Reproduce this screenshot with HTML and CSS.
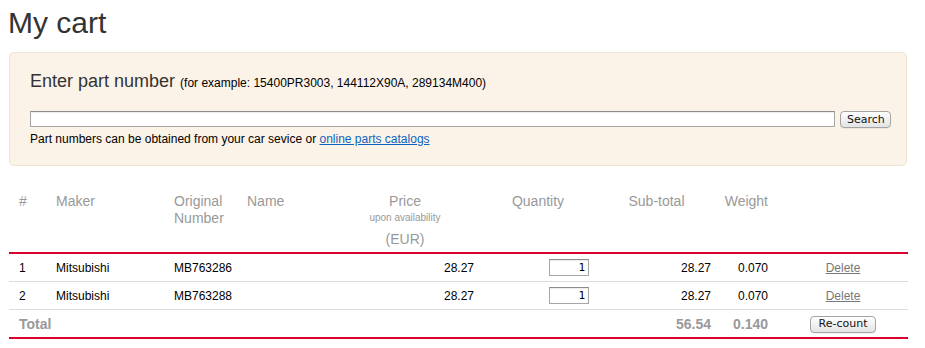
FILE: index.html
```html
<!DOCTYPE html>
<html lang="en">
<head>
  <meta charset="UTF-8">
  <title>My cart</title>
  <link rel="stylesheet" href="styles.css">
</head>
<body>

  <h1 class="page-title">My cart</h1>

  <div class="search-box">
    <h2 class="search-title">Enter part number <span class="example">(for example: 15400PR3003, 144112X90A, 289134M400)</span></h2>
    <form class="search-row" onsubmit="return false">
      <input type="text" class="search-input">
      <button type="submit" class="btn">Search</button>
    </form>
    <p class="hint">Part numbers can be obtained from your car sevice or <a href="#">online parts catalogs</a></p>
  </div>

  <table class="cart">
    <colgroup>
      <col class="c-num"><col class="c-maker"><col class="c-orig"><col class="c-name"><col class="c-price">
      <col class="c-qty"><col class="c-sub"><col class="c-weight"><col class="c-act">
    </colgroup>
    <thead>
      <tr>
        <th>#</th>
        <th>Maker</th>
        <th>Original Number</th>
        <th>Name</th>
        <th class="center">Price<span class="note">upon availability</span>(EUR)</th>
        <th class="center">Quantity</th>
        <th class="center">Sub-total</th>
        <th class="weight">Weight</th>
        <th></th>
      </tr>
    </thead>
    <tbody>
      <tr>
        <td>1</td>
        <td>Mitsubishi</td>
        <td>MB763286</td>
        <td></td>
        <td class="num">28.27</td>
        <td class="qty"><input type="text" class="qty-input" value="1"></td>
        <td class="num">28.27</td>
        <td class="num weight">0.070</td>
        <td class="center"><a href="#" class="delete">Delete</a></td>
      </tr>
      <tr>
        <td>2</td>
        <td>Mitsubishi</td>
        <td>MB763288</td>
        <td></td>
        <td class="num">28.27</td>
        <td class="qty"><input type="text" class="qty-input" value="1"></td>
        <td class="num">28.27</td>
        <td class="num weight">0.070</td>
        <td class="center"><a href="#" class="delete">Delete</a></td>
      </tr>
    </tbody>
    <tfoot>
      <tr>
        <td colspan="2">Total</td>
        <td></td>
        <td></td>
        <td></td>
        <td></td>
        <td class="num">56.54</td>
        <td class="num weight">0.140</td>
        <td class="center"><button type="button" class="btn btn-recount">Re-count</button></td>
      </tr>
    </tfoot>
  </table>

</body>
</html>
```

FILE: styles.css
```css
body {
  margin: 0;
  padding: 0 8px;
  background-color: white;
  color: black;
  font-family: "Liberation Sans", Arial, sans-serif;
  font-size: 12px;
}
.page-title {
  margin: 6px 0 12px;
  font-size: 30px;
  line-height: 34px;
  font-weight: normal;
  color: #333;
}
.search-box {
  margin: 0 10px 0 1px;
  padding: 17px 15px 18px 20px;
  background-color: #fbf3e8;
  border: 1px solid #efe4d3;
  border-radius: 5px;
}
.search-title {
  margin: 0 0 17px;
  font-size: 18px;
  line-height: 22px;
  font-weight: normal;
  color: #333;
}
.example {
  font-size: 12px;
  color: black;
}
.search-row {
  display: flex;
  align-items: flex-start;
  gap: 5px;
  margin: 0;
}
.search-input {
  flex: 1;
  box-sizing: border-box;
  height: 16px;
  margin: 0;
  padding: 0 3px;
  border: 1px solid #a6a6a6;
  border-top-color: #8c8c8c;
  box-shadow: inset 0 1px 1px rgba(0,0,0,0.08);
  background: white;
}
.btn {
  box-sizing: border-box;
  height: 17px;
  margin: 0;
  padding: 0 6px;
  font-family: "DejaVu Sans", sans-serif;
  font-size: 11px;
  line-height: 14px;
  color: #111;
  background: linear-gradient(#ffffff, #f1f1f1 50%, #e4e4e4);
  border: 1px solid #a3a3a3;
  border-radius: 4px;
  box-shadow: 0 1px 0 rgba(0,0,0,0.05);
}
.search-row .btn {
  width: 51px;
}
.hint {
  margin: 3px 0 0;
  line-height: 16px;
}
.hint a {
  color: #0b64c0;
}
.cart {
  margin: 18px 0 0 1px;
  width: 899px;
  table-layout: fixed;
  border-collapse: collapse;
}
.c-num { width: 37px; }
.c-maker { width: 118px; }
.c-orig { width: 73px; }
.c-name { width: 89px; }
.c-price { width: 158px; }
.c-qty { width: 108px; }
.c-sub { width: 129px; }
.c-weight { width: 57px; }
.c-act { width: 130px; }
.cart th {
  padding: 9px 10px 4px;
  vertical-align: top;
  text-align: left;
  font-size: 14px;
  line-height: 17px;
  font-weight: normal;
  color: #999;
  border-bottom: 2px solid #d9002d;
}
.cart th.center { text-align: center; }
.cart th.weight { text-align: right; padding-left: 3px; }
.note {
  display: block;
  margin-bottom: 6px;
  font-size: 10px;
  line-height: 15px;
}
.cart td {
  height: 27px;
  padding: 0 10px;
  vertical-align: middle;
  border-bottom: 1px solid #dcdcdc;
}
.cart td.num { text-align: right; }
.cart td.weight { padding-left: 3px; }
.cart td.center { text-align: center; }
.cart td.qty {
  text-align: right;
  padding-right: 3px;
}
.qty-input {
  box-sizing: border-box;
  width: 40px;
  height: 17px;
  margin: 0;
  padding: 0 3px;
  text-align: right;
  font-family: "DejaVu Sans Mono", monospace;
  font-size: 11px;
  border: 1px solid #a6a6a6;
  border-top-color: #8c8c8c;
  box-shadow: inset 0 1px 1px rgba(0,0,0,0.08);
  vertical-align: middle;
}
.delete {
  color: #777;
}
.cart tfoot td {
  height: 27px;
  font-size: 14px;
  font-weight: bold;
  color: #999;
  border-bottom: 2px solid #d9002d;
}
.btn-recount {
  width: 66px;
  padding: 0;
  font-weight: normal;
}
```
